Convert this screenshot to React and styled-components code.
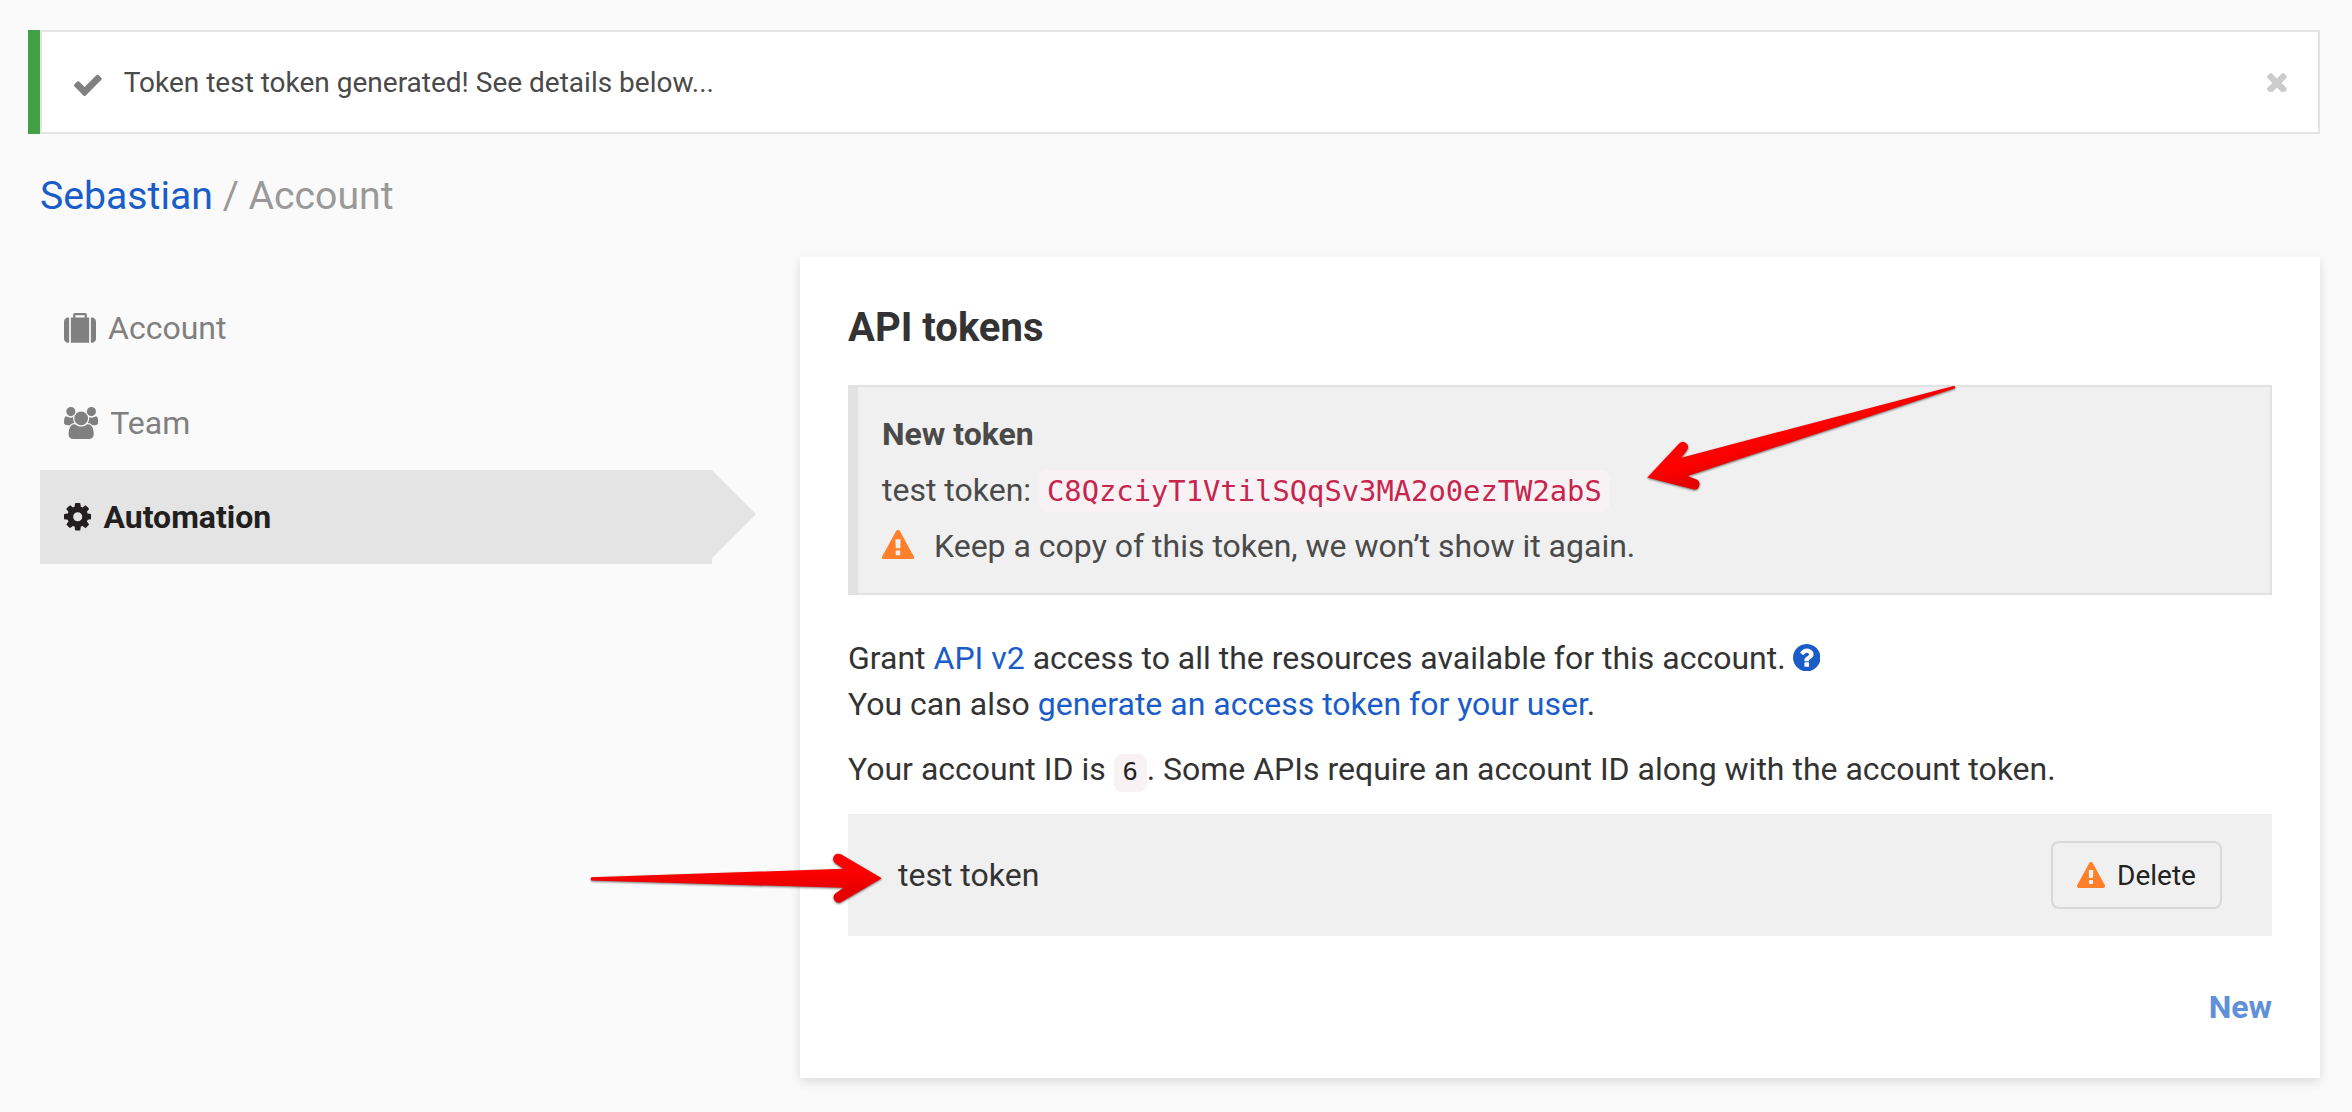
import React from "react";
import styled, { createGlobalStyle } from "styled-components";

const GlobalStyle = createGlobalStyle`
  *, *::before, *::after { box-sizing: border-box; }
  body {
    margin: 0;
    background: #fafafa;
    color: #333;
    font-family: Roboto, "Liberation Sans", sans-serif;
    font-size: 32px;
    line-height: 46px;
  }
`;

const ICONS = {
  check: {
    box: "121 292 1550 1230",
    d: "M1671 566q0 40-28 68l-724 724-136 136q-28 28-68 28t-68-28l-136-136-362-362q-28-28-28-68t28-68l136-136q28-28 68-28t68 28l294 295 656-657q28-28 68-28t68 28l136 136q28 28 28 68z",
  },
  times: {
    box: "302 366 1188 1188",
    d: "M1490 1322q0 40-28 68l-136 136q-28 28-68 28t-68-28l-294-294-294 294q-28 28-68 28t-68-28l-136-136q-28-28-28-68t28-68l294-294-294-294q-28-28-28-68t28-68l136-136q28-28 68-28t68 28l294 294 294-294q28-28 68-28t68 28l136 136q28 28 28 68t-28 68l-294 294 294 294q28 28 28 68z",
  },
  cog: {
    box: "128 128 1536 1536",
    d: "M1152 896q0-106-75-181t-181-75-181 75-75 181 75 181 181 75 181-75 75-181zm512-109v222q0 12-8 23t-20 13l-185 28q-19 54-39 91 35 50 107 138 10 12 10 25t-9 23q-27 37-99 108t-94 71q-12 0-26-9l-138-108q-44 23-91 38-16 136-29 186-7 28-36 28h-222q-14 0-24.5-8.5t-11.5-21.5l-28-184q-49-16-90-37l-141 107q-10 9-25 9-14 0-25-11-126-114-165-168-7-10-7-23 0-12 8-23 15-21 51-66.5t54-70.5q-27-50-41-99l-183-27q-13-2-21-12.5t-8-23.5v-222q0-12 8-23t19-13l186-28q14-46 39-92-40-57-107-138-10-12-10-24 0-10 9-23 26-36 98.5-107.5t94.5-71.5q13 0 26 10l138 107q44-23 91-38 16-136 29-186 7-28 36-28h222q14 0 24.5 8.5t11.5 21.5l28 184q49 16 90 37l142-107q9-9 24-9 13 0 25 10 129 119 165 170 7 8 7 22 0 12-8 23-15 21-51 66.5t-54 70.5q26 50 41 98l183 28q13 2 21 12.5t8 23.5z",
  },
  question: {
    box: "128 128 1536 1536",
    d: "M1024 1376v-192q0-14-9-23t-23-9h-192q-14 0-23 9t-9 23v192q0 14 9 23t23 9h192q14 0 23-9t9-23zm256-672q0-88-55.5-163t-138.5-116-170-41q-243 0-371 213-15 24 8 42l132 100q7 6 19 6 16 0 25-12 53-68 86-92 34-24 86-24 48 0 85.5 26t37.5 59q0 38-20 61t-68 45q-63 28-115.5 86.5t-52.5 125.5v36q0 14 9 23t23 9h192q14 0 23-9t9-23q0-19 21.5-49.5t54.5-49.5q32-18 49-28.5t46-35 44.5-48 28-60.5 12.5-81zm384 192q0 209-103 385.5t-279.5 279.5-385.5 103-385.5-103-279.5-279.5-103-385.5 103-385.5 279.5-279.5 385.5-103 385.5 103 279.5 279.5 103 385.5z",
  },
  warning: {
    box: "0 0 1792 1664",
    d: "M1024 1375v-190q0-14-9.5-23.5t-22.5-9.5h-192q-13 0-22.5 9.5t-9.5 23.5v190q0 14 9.5 23.5t22.5 9.5h192q13 0 22.5-9.5t9.5-23.5zm-2-374l18-459q0-12-10-19-13-11-24-11h-220q-11 0-24 11-10 7-10 21l17 457q0 10 10 16.5t24 6.5h185q14 0 23.5-6.5t10.5-16.5zm-14-934l768 1408q35 63-2 126-17 29-46.5 46t-63.5 17h-1536q-34 0-63.5-17t-46.5-46q-37-63-2-126l768-1408q17-31 47-49t65-18 65 18 47 49z",
  },
  suitcase: {
    box: "0 0 1792 1664",
    d: "M640 256h512v-128h-512v128zm-352 0v1408h-64q-92 0-158-66t-66-158v-960q0-92 66-158t158-66h64zm1120 0v1408h-1024v-1408h128v-160q0-40 28-68t68-28h576q40 0 68 28t28 68v160h128zm384 224v960q0 92-66 158t-158 66h-64v-1408h64q92 0 158 66t66 158z",
  },
  users: {
    box: "64 0 1920 1792",
    d: "M657 896q-162 5-265 128h-134q-82 0-138-40.5t-56-118.5q0-353 124-353 6 0 43.5 21t97.5 42.5 119 21.5q67 0 133-23-5 37-5 66 0 139 81 256zm1071 637q0 120-73 189.5t-194 69.5h-874q-121 0-194-69.5t-73-189.5q0-53 3.5-103.5t14-109 26.5-108.5 43-97.5 62-81 85.5-53.5 111.5-20q10 0 43 21.5t73 48 107 48 135 21.5 135-21.5 107-48 73-48 43-21.5q61 0 111.5 20t85.5 53.5 62 81 43 97.5 26.5 108.5 14 109 3.5 103.5zm-1024-1277q0 106-75 181t-181 75-181-75-75-181 75-181 181-75 181 75 75 181zm704 384q0 159-112.5 271.5t-271.5 112.5-271.5-112.5-112.5-271.5 112.5-271.5 271.5-112.5 271.5 112.5 112.5 271.5zm576 225q0 78-56 118.5t-138 40.5h-134q-103-123-265-128 81-117 81-256 0-29-5-66 66 23 133 23 59 0 119-21.5t97.5-42.5 43.5-21q124 0 124 353zm-128-609q0 106-75 181t-181 75-181-75-75-181 75-181 181-75 181 75 75 181z",
  },
};

const Glyph = styled.svg`
  display: block;
  flex: none;
  fill: currentColor;
`;

/* size is the icon font's em; the box is trimmed to the ink of each icon */
function Icon({ name, size = 32, className }) {
  const { box, d } = ICONS[name];
  const [, , w, h] = box.split(" ").map(Number);
  return (
    <Glyph
      className={className}
      viewBox={box}
      width={(w * size) / 1792}
      height={(h * size) / 1792}
      aria-hidden="true"
    >
      <path d={d} />
    </Glyph>
  );
}

const Page = styled.div`
  position: relative;
  width: 2352px;
  height: 1112px;
  overflow: hidden;
  padding: 30px 32px 34px 28px;
`;

const Alert = styled.div`
  display: flex;
  height: 104px;
  border-left: 12px solid #43a047;
  color: #4a4a4a;
  font-size: 28px;
`;

const AlertBody = styled.div`
  flex: 1;
  display: flex;
  align-items: center;
  padding: 0 31px 0 32px;
  background: #fff;
  border: 2px solid #e4e4e4;
`;

const AlertText = styled.span`
  padding-top: 2px;
`;

const CheckIcon = styled(Icon)`
  color: #808080;
  margin: 6px 22px 0 0;
`;

const Dismiss = styled.button`
  display: flex;
  margin-left: auto;
  padding: 1px 0 0;
  border: 0;
  background: none;
  color: #ccc;
`;

const Link = styled.a`
  color: #1a5dc8;
  text-decoration: none;
`;

const Breadcrumb = styled.nav`
  margin: 38px 0 37px 12px;
  font-size: 39.2px;
  line-height: 48px;
  color: #999;
`;

const Columns = styled.div`
  display: flex;
  justify-content: space-between;
  align-items: flex-start;
  padding-left: 12px;
`;

const Nav = styled.nav`
  width: 716px;
  padding-top: 24px;
`;

const NavItem = styled.a`
  position: relative;
  display: flex;
  align-items: center;
  gap: 12px;
  width: 672px;
  height: 94px;
  padding-left: 24px;
  color: ${(p) => (p.$active ? "#231f20" : "#808080")};
  font-weight: ${(p) => (p.$active ? 700 : 400)};
  background: ${(p) => (p.$active ? "#e4e4e4" : "transparent")};

  &:first-child { margin-bottom: 1px; }

  &::after {
    content: "";
    display: ${(p) => (p.$active ? "block" : "none")};
    position: absolute;
    left: 100%;
    top: 0;
    border: 44px solid transparent;
    border-right-width: 0;
    border-left-color: #e4e4e4;
  }
`;

const Panel = styled.main`
  width: 1520px;
  height: 821px;
  padding: 47px 48px 48px;
  background: #fff;
  box-shadow: 0 4px 10px rgba(0, 0, 0, 0.12);
`;

const Title = styled.h1`
  margin: 0 0 33px;
  font-size: 40px;
  line-height: 48px;
  font-weight: 700;
`;

const NewTokenBox = styled.section`
  height: 210px;
  margin-bottom: 40px;
  padding: 19px 24px;
  border: 2px solid #e2e2e2;
  border-left-width: 10px;
  background: #f0f0f0;
  color: #4a4a4a;
  line-height: 56px;
`;

const Line = styled.div`
  display: flex;
  align-items: ${(p) => (p.$baseline ? "baseline" : "center")};
  height: 56px;
  white-space: pre;
  font-weight: ${(p) => (p.$bold ? 700 : 400)};
`;

const Secret = styled.code`
  padding: 4px 8px;
  border-radius: 8px;
  background: #f9f2f4;
  color: #c7254e;
  font: 28.8px/34px "DejaVu Sans Mono", monospace;
`;

const WarningIcon = styled(Icon)`
  color: #ff7f2a;
  margin-right: ${(p) => p.$gap}px;
  margin-bottom: ${(p) => p.$lift || 0}px;
`;

const Text = styled.p`
  margin: 0 0 ${(p) => p.$after}px;
  white-space: pre;
`;

const HelpIcon = styled(Icon)`
  display: inline-block;
  vertical-align: -2px;
  margin-left: -1px;
  color: #1a5dc8;
`;

const AccountId = styled.code`
  display: inline-block;
  width: 33px;
  height: 38px;
  border-radius: 8px;
  background: #f9f2f4;
  color: #222;
  text-align: center;
  font: 25.6px/35px "DejaVu Sans Mono", monospace;
`;

const TokenRow = styled.div`
  display: flex;
  align-items: center;
  justify-content: space-between;
  height: 122px;
  padding: 0 50px;
  background: #f0f0f0;
`;

const DeleteButton = styled.button`
  display: flex;
  align-items: center;
  width: 171px;
  height: 68px;
  padding: 1px 0 0 24px;
  border: 2px solid #d8d8d8;
  border-radius: 8px;
  background: none;
  color: #222;
  font: 28px/40px Roboto, "Liberation Sans", sans-serif;
`;

const Footer = styled.div`
  margin-top: 48px;
  text-align: right;
  font-weight: 700;

  a { color: #6090d8; }
`;

const Annotations = styled.svg`
  position: absolute;
  left: 0;
  top: 0;
  pointer-events: none;
  filter: drop-shadow(0 1px 1px rgba(0, 0, 0, 0.55));
`;

function Arrows() {
  return (
    <Annotations width="2352" height="1112" viewBox="0 0 2352 1112">
      <defs>
        <linearGradient id="slanted" gradientUnits="userSpaceOnUse" x1="1714" y1="455" x2="1720" y2="475">
          <stop offset="0" stopColor="#f00" />
          <stop offset="1" stopColor="#e60000" />
        </linearGradient>
        <linearGradient id="level" gradientUnits="userSpaceOnUse" x1="0" y1="870" x2="0" y2="890">
          <stop offset="0" stopColor="#f00" />
          <stop offset="1" stopColor="#e60000" />
        </linearGradient>
      </defs>
      <path
        fill="url(#slanted)"
        d="M1647.3 477.5L1679.2 443.4A5.2 5.2 0 0 1 1687 450.2L1681.3 457.7L1953.5 385.9Q1956 386 1955 388.3L1687.5 476L1696 479.3A5.2 5.2 0 0 1 1694 489.4Z"
      />
      <path
        fill="url(#level)"
        d="M881.8 878.2L841 854.3A5.3 5.3 0 0 0 835.3 863.2L843.5 868.8L591.5 877.3Q590 879 591.5 880.6L843.5 887.8L835.3 893.6A5.3 5.3 0 0 0 841 902.3Z"
      />
    </Annotations>
  );
}

export default function App() {
  return (
    <>
      <GlobalStyle />
      <Page>
        <Alert>
          <AlertBody>
            <CheckIcon name="check" />
            <AlertText>Token test token generated! See details below...</AlertText>
            <Dismiss aria-label="Close">
              <Icon name="times" size={30} />
            </Dismiss>
          </AlertBody>
        </Alert>
        <Breadcrumb>
          <Link>Sebastian</Link> / Account
        </Breadcrumb>
        <Columns>
          <Nav>
            <NavItem><Icon name="suitcase" />Account</NavItem>
            <NavItem><Icon name="users" />Team</NavItem>
            <NavItem $active><Icon name="cog" />Automation</NavItem>
          </Nav>
          <Panel>
            <Title>API tokens</Title>
            <NewTokenBox>
              <Line $bold>New token</Line>
              <Line $baseline>
                {"test token: "}
                <Secret>C8QzciyT1VtilSQqSv3MA2o0ezTW2abS</Secret>
              </Line>
              <Line>
                <WarningIcon name="warning" $gap={20} $lift={3} />
                Keep a copy of this token, we won’t show it again.
              </Line>
            </NewTokenBox>
            <Text $after={19}>
              Grant <Link>API v2</Link> access to all the resources available for this account.{" "}
              <HelpIcon name="question" />
              <br />
              You can also <Link>generate an access token for your user</Link>.
            </Text>
            <Text $after={22}>
              Your account ID is <AccountId>6</AccountId>. Some APIs require an account ID along with the account token.
            </Text>
            <TokenRow>
              <span>test token</span>
              <DeleteButton>
                <WarningIcon name="warning" size={28} $gap={12} $lift={1} />
                Delete
              </DeleteButton>
            </TokenRow>
            <Footer>
              <Link>New</Link>
            </Footer>
          </Panel>
        </Columns>
        <Arrows />
      </Page>
    </>
  );
}
